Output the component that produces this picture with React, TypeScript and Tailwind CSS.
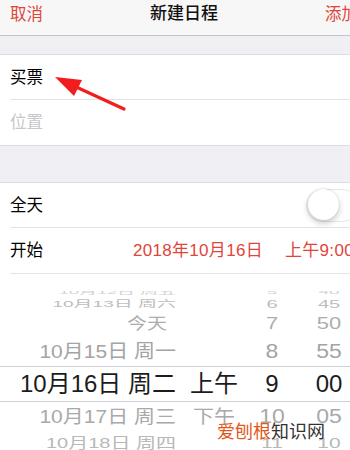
import React from "react";

const FONT = '"Liberation Sans", "Noto Sans CJK SC", sans-serif';

type RowProps = {
  h: string;
  date: string;
  ampm?: string;
  hour: string;
  minute: string;
  dateCls: string;
  numCls: string;
  extra?: string;
};

function PickerRow({ h, date, ampm, hour, minute, dateCls, numCls, extra }: RowProps) {
  return (
    <div className={`flex items-center whitespace-nowrap ${h} ${extra ?? ""}`}>
      <div className={`w-[176px] text-right ${dateCls}`}>{date}</div>
      <div className="w-[14px]" />
      <div className={`w-[48px] text-center ${dateCls}`}>{ampm ?? ""}</div>
      <div className={`w-[68px] text-center ${numCls}`}>{hour}</div>
      <div className={`w-[46px] text-center ${numCls}`}>{minute}</div>
    </div>
  );
}

export default function App() {
  return (
    <div
      className="relative w-[350px] h-[450px] overflow-hidden bg-white text-black"
      style={{ fontFamily: FONT }}
    >
      <div className="w-[368px]">
        {/* nav bar */}
        <div className="h-[36px] bg-[#f7f7f7] border-b border-[#c4c4c8] flex items-start pt-[4px] px-[10px]">
          <span className="text-[16.5px] leading-[20px] text-[#e0453a]">取消</span>
          <span className="flex-1 text-center text-[17px] leading-[20px] font-medium text-[#111]">
            新建日程
          </span>
          <span className="text-[16.5px] leading-[20px] text-[#e0453a]">添加</span>
        </div>
        <div className="h-[19px] bg-[#efeff4] border-b border-[#dcdce0]" />

        {/* title / location */}
        <div className="bg-white border-b border-[#dcdce0]">
          <div className="ml-[10px] h-[45px] border-b border-[#e3e3e6] flex items-center text-[16.5px]">
            买票
          </div>
          <div className="ml-[10px] h-[45px] flex items-center text-[16.5px] text-[#c7c7cd]">
            位置
          </div>
        </div>
        <div className="h-[37px] bg-[#efeff4] border-b border-[#dcdce0]" />

        {/* all day / start */}
        <div className="bg-white">
          <div className="ml-[10px] h-[45px] border-b border-[#e3e3e6] flex items-center justify-between pr-[9px]">
            <span className="text-[16.5px]">全天</span>
            <div className="relative w-[53px] h-[33px] rounded-full border-[1.5px] border-[#e6e6e9] bg-white">
              <div className="absolute left-[0.5px] top-[-0.5px] w-[31px] h-[31px] rounded-full bg-white shadow-[0_3px_6px_rgba(0,0,0,0.22),0_0_0_0.5px_rgba(0,0,0,0.1)]" />
            </div>
          </div>
          <div className="ml-[10px] h-[46px] border-b border-[#e3e3e6] flex items-center whitespace-nowrap">
            <span className="w-[123px] text-[16.5px]">开始</span>
            <span className="w-[152px] text-[17px] tracking-[0.3px] text-[#e0453a]">2018年10月16日</span>
            <span className="text-[17px] tracking-[0.3px] text-[#e0453a]">上午9:00</span>
          </div>
        </div>

        {/* picker */}
        <div className="bg-white flex flex-col">
          <div className="h-[17px]" />
          <div className="h-[6px] overflow-hidden flex items-end">
            <PickerRow
              h="h-[10px]"
              date="10月12日 周五"
              hour="5"
              minute="40"
              dateCls="text-[18px] leading-[10px] scale-y-[0.3] text-[#d2d2d2]"
              numCls="text-[19px] leading-[10px] scale-y-[0.3] text-[#d2d2d2]"
            />
          </div>
          <PickerRow
            h="h-[14px]"
            date="10月13日 周六"
            hour="6"
            minute="45"
            dateCls="text-[19px] leading-[14px] scale-y-[0.5] text-[#bdbdbd]"
            numCls="text-[20px] leading-[14px] scale-y-[0.5] text-[#bdbdbd]"
          />
          <PickerRow
            h="h-[26px]"
            date="今天"
            hour="7"
            minute="50"
            dateCls="text-[20px] leading-[26px] scale-y-[0.78] text-[#adadad] pr-[9px]"
            numCls="text-[22px] leading-[26px] scale-y-[0.78] text-[#adadad]"
          />
          <PickerRow
            h="h-[29px]"
            date="10月15日 周一"
            hour="8"
            minute="55"
            dateCls="text-[21px] leading-[27px] scale-y-[0.9] text-[#a4a4a4]"
            numCls="text-[23px] leading-[27px] scale-y-[0.9] text-[#a4a4a4]"
          />
          <div className="h-[36px] border-y border-[#d2d2d6] flex items-center">
            <PickerRow
              h="h-[34px]"
              date="10月16日 周二"
              ampm="上午"
              hour="9"
              minute="00"
              dateCls="text-[24px] leading-[34px] text-[#1c1c1c]"
              numCls="text-[24px] leading-[34px] text-[#1c1c1c]"
            />
          </div>
          <PickerRow
            h="h-[29px]"
            date="10月17日 周三"
            ampm="下午"
            hour="10"
            minute="05"
            dateCls="text-[21px] leading-[27px] scale-y-[0.88] text-[#a9a9a9]"
            numCls="text-[23px] leading-[27px] scale-y-[0.88] text-[#a9a9a9]"
          />
          <PickerRow
            h="h-[24px]"
            date="10月18日 周四"
            hour="11"
            minute="10"
            dateCls="text-[20px] leading-[24px] scale-y-[0.72] text-[#b8b8b8]"
            numCls="text-[21px] leading-[24px] scale-y-[0.72] text-[#b8b8b8]"
          />
        </div>
      </div>

      {/* red arrow annotation */}
      <svg className="absolute left-0 top-0" width="350" height="450" viewBox="0 0 350 450">
        <line x1="124" y1="109" x2="74" y2="86" stroke="#f21d1d" strokeWidth="3.2" strokeLinecap="round" />
        <polygon points="55,77 82,80 74,96" fill="#f21d1d" />
      </svg>

      {/* watermark */}
      <div className="absolute left-[217px] top-[420px] text-[18px] leading-[24px] whitespace-nowrap">
        <span className="text-[#e2581c]">爱刨根</span>
        <span className="text-[#333]">知识网</span>
      </div>
    </div>
  );
}
